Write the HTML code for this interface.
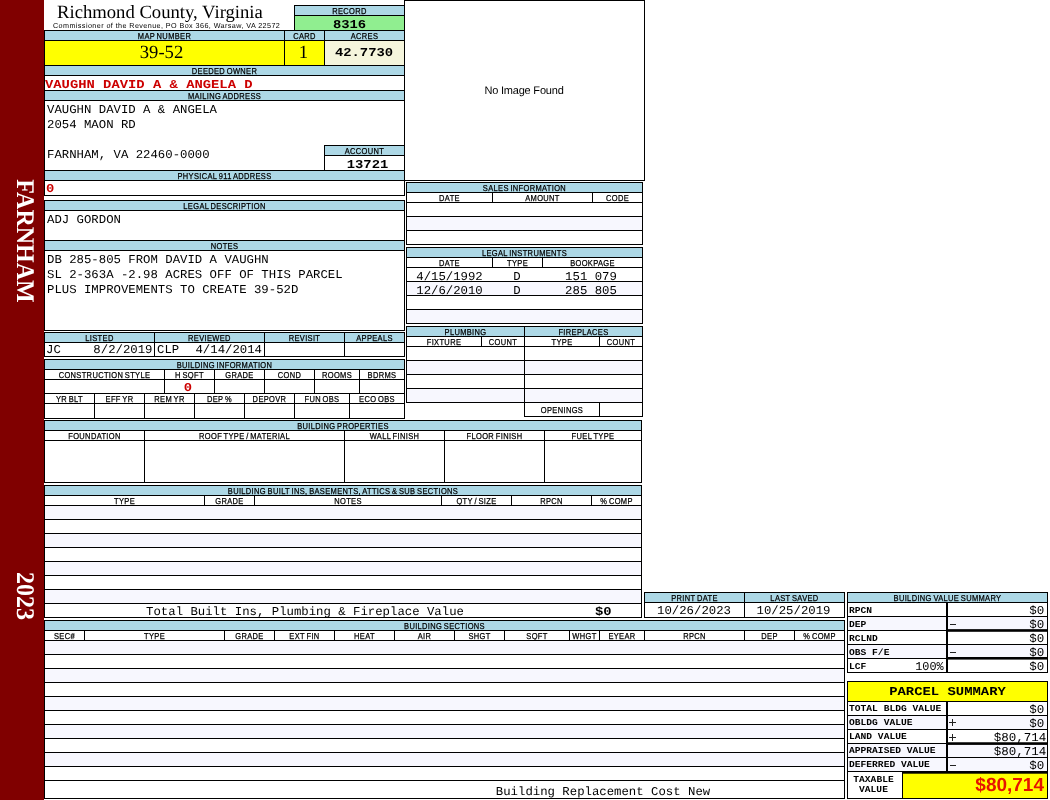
<!DOCTYPE html>
<html><head><meta charset="utf-8"><title>Property Card</title>
<style>
html,body{margin:0;padding:0;background:#fff;}
body{width:1050px;height:800px;position:relative;overflow:hidden;font-family:"Liberation Sans",sans-serif;text-rendering:geometricPrecision;}
#p{position:absolute;left:0;top:0;width:1050px;height:800px;will-change:transform;}
#p div{position:absolute;white-space:nowrap;overflow:visible;line-height:14px;height:14px;}
.h{font-family:"Liberation Sans",sans-serif;font-size:8.6px;letter-spacing:.4px;text-align:center;color:#000;transform:scaleX(.872);word-spacing:-.9px;-webkit-text-stroke:.25px #000;}
.m{font-family:"Liberation Mono",monospace;font-size:12px;color:#000;transform-origin:0 50%;}
.b{font-weight:bold;}
.m.c{text-align:center;transform-origin:50% 50%;}
.m.r{text-align:right;transform-origin:100% 50%;}
.red{color:#cc0000;}
.title{font-family:"Liberation Serif",serif;font-size:18.67px;text-align:center;}
.sub{font-family:"Liberation Sans",sans-serif;font-size:7.2px;text-align:center;letter-spacing:.42px;}
.big{font-family:"Liberation Serif",serif;font-size:18.67px;text-align:center;}
.noimg{font-family:"Liberation Sans",sans-serif;font-size:11px;letter-spacing:-.2px;text-align:center;}
.tax{font-family:"Liberation Sans",sans-serif;font-weight:bold;font-size:19px;color:#e61400;text-align:right;}
#p .side{font:bold 24px/24px "Liberation Serif",serif;height:24px;color:#fff;transform:translate(-50%,-50%) rotate(90deg) scaleY(1.06);}
</style></head>
<body><div id="p">
<div style="left:0px;top:0px;width:44px;height:800px;background:#800000"></div>
<div class="side" style="left:24px;top:240.6px;">FARNHAM</div>
<div class="side" style="left:24px;top:596px;">2023</div>
<div class="title" style="left:57px;top:6px;width:201px;">Richmond County, Virginia</div>
<div class="sub" style="left:53px;top:19px;width:226px;">Commissioner of the Revenue, PO Box 366, Warsaw, VA 22572</div>
<div style="left:295px;top:6px;width:109px;height:9px;background:#add8e6"></div>
<div class="h" style="left:295px;top:4px;width:109px;">RECORD</div>
<div style="left:295px;top:16px;width:109px;height:14px;background:#90ee90"></div>
<div style="left:294px;top:5px;width:111px;height:1px;background:#000"></div>
<div style="left:294px;top:30px;width:111px;height:1px;background:#000"></div>
<div style="left:294px;top:5px;width:1px;height:26px;background:#000"></div>
<div style="left:404px;top:5px;width:1px;height:26px;background:#000"></div>
<div style="left:294px;top:15px;width:111px;height:1px;background:#000"></div>
<div class="m b c" style="left:295px;top:18px;width:109px;transform:scaleX(1.1528);">8316</div>
<div style="left:45px;top:31px;width:239px;height:9px;background:#add8e6"></div>
<div class="h" style="left:45px;top:29px;width:239px;">MAP NUMBER</div>
<div style="left:285px;top:31px;width:39px;height:9px;background:#add8e6"></div>
<div class="h" style="left:285px;top:29px;width:39px;">CARD</div>
<div style="left:325px;top:31px;width:79px;height:9px;background:#add8e6"></div>
<div class="h" style="left:325px;top:29px;width:79px;">ACRES</div>
<div style="left:45px;top:41px;width:239px;height:24px;background:#ffff00"></div>
<div style="left:285px;top:41px;width:39px;height:24px;background:#ffff00"></div>
<div style="left:325px;top:41px;width:79px;height:24px;background:#f5f5dc"></div>
<div class="big" style="left:45px;top:46px;width:233px;">39-52</div>
<div class="big" style="left:285px;top:46px;width:37px;">1</div>
<div class="m b c" style="left:325px;top:46px;width:78px;transform:scaleX(1.1528);">42.7730</div>
<div style="left:44px;top:30px;width:361px;height:1px;background:#000"></div>
<div style="left:44px;top:40px;width:361px;height:1px;background:#000"></div>
<div style="left:44px;top:65px;width:361px;height:1px;background:#000"></div>
<div style="left:44px;top:30px;width:1px;height:36px;background:#000"></div>
<div style="left:284px;top:30px;width:1px;height:36px;background:#000"></div>
<div style="left:324px;top:30px;width:1px;height:36px;background:#000"></div>
<div style="left:404px;top:30px;width:1px;height:36px;background:#000"></div>
<div style="left:45px;top:66px;width:359px;height:9px;background:#add8e6"></div>
<div class="h" style="left:45px;top:64px;width:359px;">DEEDED OWNER</div>
<div style="left:44px;top:75px;width:361px;height:1px;background:#000"></div>
<div class="m b red" style="left:45.4px;top:78px;width:350px;transform:scaleX(1.1528);">VAUGHN DAVID A &amp; ANGELA D</div>
<div style="left:45px;top:91px;width:359px;height:9px;background:#add8e6"></div>
<div class="h" style="left:45px;top:89px;width:359px;">MAILING ADDRESS</div>
<div style="left:44px;top:90px;width:361px;height:1px;background:#000"></div>
<div style="left:44px;top:100px;width:361px;height:1px;background:#000"></div>
<div class="m" style="left:47px;top:103px;width:350px;transform:scaleX(1.0264);">VAUGHN DAVID A &amp; ANGELA</div>
<div class="m" style="left:47px;top:118px;width:350px;transform:scaleX(1.0264);">2054 MAON RD</div>
<div class="m" style="left:47px;top:148px;width:350px;transform:scaleX(1.0264);">FARNHAM, VA 22460-0000</div>
<div style="left:325px;top:146px;width:79px;height:9px;background:#add8e6"></div>
<div class="h" style="left:325px;top:144px;width:79px;">ACCOUNT</div>
<div style="left:324px;top:145px;width:81px;height:1px;background:#000"></div>
<div style="left:324px;top:170px;width:81px;height:1px;background:#000"></div>
<div style="left:324px;top:145px;width:1px;height:26px;background:#000"></div>
<div style="left:404px;top:145px;width:1px;height:26px;background:#000"></div>
<div style="left:324px;top:155px;width:81px;height:1px;background:#000"></div>
<div class="m b c" style="left:325px;top:158px;width:85px;transform:scaleX(1.1528);">13721</div>
<div style="left:45px;top:171px;width:359px;height:9px;background:#add8e6"></div>
<div class="h" style="left:45px;top:169px;width:359px;">PHYSICAL 911 ADDRESS</div>
<div style="left:44px;top:170px;width:361px;height:1px;background:#000"></div>
<div style="left:44px;top:180px;width:361px;height:1px;background:#000"></div>
<div style="left:44px;top:195px;width:361px;height:1px;background:#000"></div>
<div class="m b red" style="left:46px;top:182px;width:100px;transform:scaleX(1.1528);">0</div>
<div style="left:44px;top:65px;width:1px;height:131px;background:#000"></div>
<div style="left:404px;top:65px;width:1px;height:131px;background:#000"></div>
<div style="left:45px;top:201px;width:359px;height:9px;background:#add8e6"></div>
<div class="h" style="left:45px;top:199px;width:359px;">LEGAL DESCRIPTION</div>
<div style="left:45px;top:241px;width:359px;height:9px;background:#add8e6"></div>
<div class="h" style="left:45px;top:239px;width:359px;">NOTES</div>
<div style="left:44px;top:200px;width:361px;height:1px;background:#000"></div>
<div style="left:44px;top:210px;width:361px;height:1px;background:#000"></div>
<div style="left:44px;top:240px;width:361px;height:1px;background:#000"></div>
<div style="left:44px;top:250px;width:361px;height:1px;background:#000"></div>
<div style="left:44px;top:330px;width:361px;height:1px;background:#000"></div>
<div style="left:44px;top:200px;width:1px;height:131px;background:#000"></div>
<div style="left:404px;top:200px;width:1px;height:131px;background:#000"></div>
<div class="m" style="left:47px;top:213px;width:350px;transform:scaleX(1.0264);">ADJ GORDON</div>
<div class="m" style="left:47px;top:253px;width:350px;transform:scaleX(1.0264);">DB 285-805 FROM DAVID A VAUGHN</div>
<div class="m" style="left:47px;top:268px;width:350px;transform:scaleX(1.0264);">SL 2-363A -2.98 ACRES OFF OF THIS PARCEL</div>
<div class="m" style="left:47px;top:283px;width:350px;transform:scaleX(1.0264);">PLUS IMPROVEMENTS TO CREATE 39-52D</div>
<div style="left:45px;top:333px;width:109px;height:9px;background:#add8e6"></div>
<div class="h" style="left:45px;top:331px;width:109px;">LISTED</div>
<div style="left:155px;top:333px;width:109px;height:9px;background:#add8e6"></div>
<div class="h" style="left:155px;top:331px;width:109px;">REVIEWED</div>
<div style="left:265px;top:333px;width:79px;height:9px;background:#add8e6"></div>
<div class="h" style="left:265px;top:331px;width:79px;">REVISIT</div>
<div style="left:345px;top:333px;width:59px;height:9px;background:#add8e6"></div>
<div class="h" style="left:345px;top:331px;width:59px;">APPEALS</div>
<div style="left:44px;top:332px;width:361px;height:1px;background:#000"></div>
<div style="left:44px;top:342px;width:361px;height:1px;background:#000"></div>
<div style="left:44px;top:356px;width:361px;height:1px;background:#000"></div>
<div style="left:44px;top:332px;width:1px;height:25px;background:#000"></div>
<div style="left:154px;top:332px;width:1px;height:25px;background:#000"></div>
<div style="left:264px;top:332px;width:1px;height:25px;background:#000"></div>
<div style="left:344px;top:332px;width:1px;height:25px;background:#000"></div>
<div style="left:404px;top:332px;width:1px;height:25px;background:#000"></div>
<div class="m" style="left:46.3px;top:343px;width:50px;transform:scaleX(1.0264);">JC</div>
<div class="m r" style="left:60px;top:343px;width:92.5px;transform:scaleX(1.0264);">8/2/2019</div>
<div class="m" style="left:156.7px;top:343px;width:50px;transform:scaleX(1.0264);">CLP</div>
<div class="m r" style="left:170px;top:343px;width:92px;transform:scaleX(1.0264);">4/14/2014</div>
<div style="left:45px;top:360px;width:359px;height:9px;background:#add8e6"></div>
<div class="h" style="left:45px;top:358px;width:359px;">BUILDING INFORMATION</div>
<div class="h" style="left:45px;top:368px;width:119px;">CONSTRUCTION STYLE</div>
<div class="h" style="left:165px;top:368px;width:49px;">H SQFT</div>
<div class="h" style="left:215px;top:368px;width:49px;">GRADE</div>
<div class="h" style="left:265px;top:368px;width:49px;">COND</div>
<div class="h" style="left:315px;top:368px;width:44px;">ROOMS</div>
<div class="h" style="left:360px;top:368px;width:44px;">BDRMS</div>
<div style="left:44px;top:369px;width:1px;height:25px;background:#000"></div>
<div style="left:164px;top:369px;width:1px;height:25px;background:#000"></div>
<div style="left:214px;top:369px;width:1px;height:25px;background:#000"></div>
<div style="left:264px;top:369px;width:1px;height:25px;background:#000"></div>
<div style="left:314px;top:369px;width:1px;height:25px;background:#000"></div>
<div style="left:359px;top:369px;width:1px;height:25px;background:#000"></div>
<div style="left:404px;top:369px;width:1px;height:25px;background:#000"></div>
<div class="h" style="left:45px;top:392px;width:49px;">YR BLT</div>
<div class="h" style="left:95px;top:392px;width:49px;">EFF YR</div>
<div class="h" style="left:145px;top:392px;width:49px;">REM YR</div>
<div class="h" style="left:195px;top:392px;width:49px;">DEP %</div>
<div class="h" style="left:245px;top:392px;width:49px;">DEPOVR</div>
<div class="h" style="left:295px;top:392px;width:54px;">FUN OBS</div>
<div class="h" style="left:350px;top:392px;width:54px;">ECO OBS</div>
<div style="left:44px;top:393px;width:1px;height:26px;background:#000"></div>
<div style="left:94px;top:393px;width:1px;height:26px;background:#000"></div>
<div style="left:144px;top:393px;width:1px;height:26px;background:#000"></div>
<div style="left:194px;top:393px;width:1px;height:26px;background:#000"></div>
<div style="left:244px;top:393px;width:1px;height:26px;background:#000"></div>
<div style="left:294px;top:393px;width:1px;height:26px;background:#000"></div>
<div style="left:349px;top:393px;width:1px;height:26px;background:#000"></div>
<div style="left:404px;top:393px;width:1px;height:26px;background:#000"></div>
<div style="left:44px;top:359px;width:361px;height:1px;background:#000"></div>
<div style="left:44px;top:369px;width:361px;height:1px;background:#000"></div>
<div style="left:44px;top:379px;width:361px;height:1px;background:#000"></div>
<div style="left:44px;top:393px;width:361px;height:1px;background:#000"></div>
<div style="left:44px;top:403px;width:361px;height:1px;background:#000"></div>
<div style="left:44px;top:418px;width:361px;height:1px;background:#000"></div>
<div style="left:44px;top:359px;width:1px;height:60px;background:#000"></div>
<div style="left:404px;top:359px;width:1px;height:60px;background:#000"></div>
<div class="m b red c" style="left:165px;top:381px;width:46px;transform:scaleX(1.1528);">0</div>
<div style="left:404px;top:0px;width:241px;height:1px;background:#000"></div>
<div style="left:404px;top:180px;width:241px;height:1px;background:#000"></div>
<div style="left:404px;top:0px;width:1px;height:181px;background:#000"></div>
<div style="left:644px;top:0px;width:1px;height:181px;background:#000"></div>
<div class="noimg" style="left:406px;top:84px;width:236px;">No Image Found</div>
<div style="left:407px;top:183px;width:235px;height:9px;background:#add8e6"></div>
<div class="h" style="left:407px;top:181px;width:235px;">SALES INFORMATION</div>
<div class="h" style="left:407px;top:191px;width:85px;">DATE</div>
<div style="left:406px;top:192px;width:1px;height:11px;background:#000"></div>
<div class="h" style="left:493px;top:191px;width:99px;">AMOUNT</div>
<div style="left:492px;top:192px;width:1px;height:11px;background:#000"></div>
<div class="h" style="left:593px;top:191px;width:49px;">CODE</div>
<div style="left:592px;top:192px;width:1px;height:11px;background:#000"></div>
<div style="left:407px;top:217px;width:235px;height:13px;background:#f7f7fe"></div>
<div style="left:406px;top:182px;width:237px;height:1px;background:#000"></div>
<div style="left:406px;top:192px;width:237px;height:1px;background:#000"></div>
<div style="left:406px;top:202px;width:237px;height:1px;background:#000"></div>
<div style="left:406px;top:216px;width:237px;height:1px;background:#000"></div>
<div style="left:406px;top:230px;width:237px;height:1px;background:#000"></div>
<div style="left:406px;top:244px;width:237px;height:1px;background:#000"></div>
<div style="left:406px;top:182px;width:1px;height:63px;background:#000"></div>
<div style="left:642px;top:182px;width:1px;height:63px;background:#000"></div>
<div style="left:407px;top:248px;width:235px;height:9px;background:#add8e6"></div>
<div class="h" style="left:407px;top:246px;width:235px;">LEGAL INSTRUMENTS</div>
<div class="h" style="left:407px;top:256px;width:85px;">DATE</div>
<div style="left:406px;top:257px;width:1px;height:11px;background:#000"></div>
<div class="h" style="left:493px;top:256px;width:49px;">TYPE</div>
<div style="left:492px;top:257px;width:1px;height:11px;background:#000"></div>
<div class="h" style="left:543px;top:256px;width:99px;">BOOKPAGE</div>
<div style="left:542px;top:257px;width:1px;height:11px;background:#000"></div>
<div style="left:407px;top:282px;width:235px;height:13px;background:#f7f7fe"></div>
<div style="left:407px;top:310px;width:235px;height:13px;background:#f7f7fe"></div>
<div style="left:406px;top:247px;width:237px;height:1px;background:#000"></div>
<div style="left:406px;top:257px;width:237px;height:1px;background:#000"></div>
<div style="left:406px;top:267px;width:237px;height:1px;background:#000"></div>
<div style="left:406px;top:281px;width:237px;height:1px;background:#000"></div>
<div style="left:406px;top:295px;width:237px;height:1px;background:#000"></div>
<div style="left:406px;top:309px;width:237px;height:1px;background:#000"></div>
<div style="left:406px;top:323px;width:237px;height:1px;background:#000"></div>
<div style="left:406px;top:247px;width:1px;height:77px;background:#000"></div>
<div style="left:642px;top:247px;width:1px;height:77px;background:#000"></div>
<div class="m c" style="left:407px;top:270px;width:85px;transform:scaleX(1.0264);">4/15/1992</div>
<div class="m c" style="left:493px;top:270px;width:48px;transform:scaleX(1.0264);">D</div>
<div class="m c" style="left:543px;top:270px;width:96px;transform:scaleX(1.0264);">151 079</div>
<div class="m c" style="left:407px;top:284px;width:85px;transform:scaleX(1.0264);">12/6/2010</div>
<div class="m c" style="left:493px;top:284px;width:48px;transform:scaleX(1.0264);">D</div>
<div class="m c" style="left:543px;top:284px;width:96px;transform:scaleX(1.0264);">285 805</div>
<div style="left:407px;top:327px;width:117px;height:9px;background:#add8e6"></div>
<div class="h" style="left:407px;top:325px;width:117px;">PLUMBING</div>
<div style="left:525px;top:327px;width:117px;height:9px;background:#add8e6"></div>
<div class="h" style="left:525px;top:325px;width:117px;">FIREPLACES</div>
<div class="h" style="left:407px;top:335px;width:74px;">FIXTURE</div>
<div class="h" style="left:482px;top:335px;width:42px;">COUNT</div>
<div class="h" style="left:525px;top:335px;width:74px;">TYPE</div>
<div class="h" style="left:600px;top:335px;width:42px;">COUNT</div>
<div style="left:407px;top:361px;width:235px;height:13px;background:#f7f7fe"></div>
<div style="left:407px;top:389px;width:235px;height:13px;background:#f7f7fe"></div>
<div style="left:406px;top:326px;width:237px;height:1px;background:#000"></div>
<div style="left:406px;top:336px;width:237px;height:1px;background:#000"></div>
<div style="left:406px;top:346px;width:237px;height:1px;background:#000"></div>
<div style="left:406px;top:360px;width:237px;height:1px;background:#000"></div>
<div style="left:406px;top:374px;width:237px;height:1px;background:#000"></div>
<div style="left:406px;top:388px;width:237px;height:1px;background:#000"></div>
<div style="left:406px;top:402px;width:237px;height:1px;background:#000"></div>
<div style="left:524px;top:416px;width:119px;height:1px;background:#000"></div>
<div style="left:406px;top:326px;width:1px;height:77px;background:#000"></div>
<div style="left:524px;top:326px;width:1px;height:91px;background:#000"></div>
<div style="left:642px;top:326px;width:1px;height:91px;background:#000"></div>
<div style="left:481px;top:336px;width:1px;height:11px;background:#000"></div>
<div style="left:599px;top:336px;width:1px;height:11px;background:#000"></div>
<div style="left:599px;top:402px;width:1px;height:15px;background:#000"></div>
<div class="h" style="left:525px;top:403px;width:74px;">OPENINGS</div>
<div style="left:45px;top:421px;width:596px;height:9px;background:#add8e6"></div>
<div class="h" style="left:45px;top:419px;width:596px;">BUILDING PROPERTIES</div>
<div class="h" style="left:45px;top:429px;width:99px;">FOUNDATION</div>
<div class="h" style="left:145px;top:429px;width:199px;">ROOF TYPE / MATERIAL</div>
<div class="h" style="left:345px;top:429px;width:99px;">WALL FINISH</div>
<div class="h" style="left:445px;top:429px;width:99px;">FLOOR FINISH</div>
<div class="h" style="left:545px;top:429px;width:96px;">FUEL TYPE</div>
<div style="left:44px;top:430px;width:1px;height:53px;background:#000"></div>
<div style="left:144px;top:430px;width:1px;height:53px;background:#000"></div>
<div style="left:344px;top:430px;width:1px;height:53px;background:#000"></div>
<div style="left:444px;top:430px;width:1px;height:53px;background:#000"></div>
<div style="left:544px;top:430px;width:1px;height:53px;background:#000"></div>
<div style="left:641px;top:430px;width:1px;height:53px;background:#000"></div>
<div style="left:44px;top:420px;width:598px;height:1px;background:#000"></div>
<div style="left:44px;top:430px;width:598px;height:1px;background:#000"></div>
<div style="left:44px;top:440px;width:598px;height:1px;background:#000"></div>
<div style="left:44px;top:482px;width:598px;height:1px;background:#000"></div>
<div style="left:44px;top:420px;width:1px;height:63px;background:#000"></div>
<div style="left:641px;top:420px;width:1px;height:63px;background:#000"></div>
<div style="left:45px;top:486px;width:596px;height:9px;background:#add8e6"></div>
<div class="h" style="left:45px;top:484px;width:596px;">BUILDING BUILT INS, BASEMENTS, ATTICS &amp; SUB SECTIONS</div>
<div class="h" style="left:45px;top:494px;width:159px;">TYPE</div>
<div style="left:44px;top:495px;width:1px;height:11px;background:#000"></div>
<div class="h" style="left:205px;top:494px;width:49px;">GRADE</div>
<div style="left:204px;top:495px;width:1px;height:11px;background:#000"></div>
<div class="h" style="left:255px;top:494px;width:186px;">NOTES</div>
<div style="left:254px;top:495px;width:1px;height:11px;background:#000"></div>
<div class="h" style="left:442px;top:494px;width:69px;">QTY / SIZE</div>
<div style="left:441px;top:495px;width:1px;height:11px;background:#000"></div>
<div class="h" style="left:512px;top:494px;width:79px;">RPCN</div>
<div style="left:511px;top:495px;width:1px;height:11px;background:#000"></div>
<div class="h" style="left:592px;top:494px;width:49px;">% COMP</div>
<div style="left:591px;top:495px;width:1px;height:11px;background:#000"></div>
<div style="left:45px;top:506px;width:596px;height:13px;background:#f7f7fe"></div>
<div style="left:45px;top:534px;width:596px;height:13px;background:#f7f7fe"></div>
<div style="left:45px;top:562px;width:596px;height:13px;background:#f7f7fe"></div>
<div style="left:45px;top:590px;width:596px;height:13px;background:#f7f7fe"></div>
<div style="left:44px;top:485px;width:598px;height:1px;background:#000"></div>
<div style="left:44px;top:495px;width:598px;height:1px;background:#000"></div>
<div style="left:44px;top:505px;width:598px;height:1px;background:#000"></div>
<div style="left:44px;top:519px;width:598px;height:1px;background:#000"></div>
<div style="left:44px;top:533px;width:598px;height:1px;background:#000"></div>
<div style="left:44px;top:547px;width:598px;height:1px;background:#000"></div>
<div style="left:44px;top:561px;width:598px;height:1px;background:#000"></div>
<div style="left:44px;top:575px;width:598px;height:1px;background:#000"></div>
<div style="left:44px;top:589px;width:598px;height:1px;background:#000"></div>
<div style="left:44px;top:603px;width:598px;height:1px;background:#000"></div>
<div style="left:44px;top:617px;width:598px;height:1px;background:#000"></div>
<div style="left:44px;top:485px;width:1px;height:133px;background:#000"></div>
<div style="left:641px;top:485px;width:1px;height:133px;background:#000"></div>
<div class="m c" style="left:105.3px;top:605px;width:400px;transform:scaleX(1.0264);">Total Built Ins, Plumbing &amp; Fireplace Value</div>
<div class="m b r" style="left:540px;top:605px;width:71.6px;transform:scaleX(1.1528);">$0</div>
<div style="left:645px;top:593px;width:99px;height:9px;background:#add8e6"></div>
<div class="h" style="left:645px;top:591px;width:99px;">PRINT DATE</div>
<div style="left:745px;top:593px;width:99px;height:9px;background:#add8e6"></div>
<div class="h" style="left:745px;top:591px;width:99px;">LAST SAVED</div>
<div style="left:644px;top:592px;width:201px;height:1px;background:#000"></div>
<div style="left:644px;top:602px;width:201px;height:1px;background:#000"></div>
<div style="left:644px;top:617px;width:201px;height:1px;background:#000"></div>
<div style="left:644px;top:592px;width:1px;height:26px;background:#000"></div>
<div style="left:744px;top:592px;width:1px;height:26px;background:#000"></div>
<div style="left:844px;top:592px;width:1px;height:26px;background:#000"></div>
<div class="m c" style="left:645px;top:604px;width:98px;transform:scaleX(1.0264);">10/26/2023</div>
<div class="m c" style="left:745px;top:604px;width:97px;transform:scaleX(1.0264);">10/25/2019</div>
<div style="left:45px;top:621px;width:799px;height:9px;background:#add8e6"></div>
<div class="h" style="left:45px;top:619px;width:799px;">BUILDING SECTIONS</div>
<div class="h" style="left:45px;top:629px;width:39px;">SEC#</div>
<div style="left:44px;top:630px;width:1px;height:11px;background:#000"></div>
<div class="h" style="left:85px;top:629px;width:139px;">TYPE</div>
<div style="left:84px;top:630px;width:1px;height:11px;background:#000"></div>
<div class="h" style="left:225px;top:629px;width:49px;">GRADE</div>
<div style="left:224px;top:630px;width:1px;height:11px;background:#000"></div>
<div class="h" style="left:275px;top:629px;width:59px;">EXT FIN</div>
<div style="left:274px;top:630px;width:1px;height:11px;background:#000"></div>
<div class="h" style="left:335px;top:629px;width:59px;">HEAT</div>
<div style="left:334px;top:630px;width:1px;height:11px;background:#000"></div>
<div class="h" style="left:395px;top:629px;width:59px;">AIR</div>
<div style="left:394px;top:630px;width:1px;height:11px;background:#000"></div>
<div class="h" style="left:455px;top:629px;width:49px;">SHGT</div>
<div style="left:454px;top:630px;width:1px;height:11px;background:#000"></div>
<div class="h" style="left:505px;top:629px;width:64px;">SQFT</div>
<div style="left:504px;top:630px;width:1px;height:11px;background:#000"></div>
<div class="h" style="left:570px;top:629px;width:29px;">WHGT</div>
<div style="left:569px;top:630px;width:1px;height:11px;background:#000"></div>
<div class="h" style="left:600px;top:629px;width:44px;">EYEAR</div>
<div style="left:599px;top:630px;width:1px;height:11px;background:#000"></div>
<div class="h" style="left:645px;top:629px;width:99px;">RPCN</div>
<div style="left:644px;top:630px;width:1px;height:11px;background:#000"></div>
<div class="h" style="left:745px;top:629px;width:49px;">DEP</div>
<div style="left:744px;top:630px;width:1px;height:11px;background:#000"></div>
<div class="h" style="left:795px;top:629px;width:49px;">% COMP</div>
<div style="left:794px;top:630px;width:1px;height:11px;background:#000"></div>
<div style="left:45px;top:641px;width:799px;height:13px;background:#f7f7fe"></div>
<div style="left:45px;top:669px;width:799px;height:13px;background:#f7f7fe"></div>
<div style="left:45px;top:697px;width:799px;height:13px;background:#f7f7fe"></div>
<div style="left:45px;top:725px;width:799px;height:13px;background:#f7f7fe"></div>
<div style="left:45px;top:753px;width:799px;height:13px;background:#f7f7fe"></div>
<div style="left:44px;top:620px;width:801px;height:1px;background:#000"></div>
<div style="left:44px;top:630px;width:801px;height:1px;background:#000"></div>
<div style="left:44px;top:640px;width:801px;height:1px;background:#000"></div>
<div style="left:44px;top:654px;width:801px;height:1px;background:#000"></div>
<div style="left:44px;top:668px;width:801px;height:1px;background:#000"></div>
<div style="left:44px;top:682px;width:801px;height:1px;background:#000"></div>
<div style="left:44px;top:696px;width:801px;height:1px;background:#000"></div>
<div style="left:44px;top:710px;width:801px;height:1px;background:#000"></div>
<div style="left:44px;top:724px;width:801px;height:1px;background:#000"></div>
<div style="left:44px;top:738px;width:801px;height:1px;background:#000"></div>
<div style="left:44px;top:752px;width:801px;height:1px;background:#000"></div>
<div style="left:44px;top:766px;width:801px;height:1px;background:#000"></div>
<div style="left:44px;top:780px;width:801px;height:1px;background:#000"></div>
<div style="left:44px;top:798px;width:801px;height:1px;background:#000"></div>
<div style="left:44px;top:620px;width:1px;height:179px;background:#000"></div>
<div style="left:844px;top:620px;width:1px;height:179px;background:#000"></div>
<div class="m c" style="left:403px;top:785px;width:400px;transform:scaleX(1.0264);">Building Replacement Cost New</div>
<div style="left:848px;top:593px;width:199px;height:9px;background:#add8e6"></div>
<div class="h" style="left:848px;top:591px;width:199px;">BUILDING VALUE SUMMARY</div>
<div style="left:848px;top:617px;width:199px;height:13px;background:#f7f7fe"></div>
<div style="left:848px;top:645px;width:199px;height:13px;background:#f7f7fe"></div>
<div class="m b" style="left:849px;top:604px;width:97px;transform:scaleX(1.0685);font-size:9px;">RPCN</div>
<div class="m r" style="left:948px;top:604px;width:96.2px;transform:scaleX(1.0417);">$0</div>
<div class="m b" style="left:849px;top:618px;width:97px;transform:scaleX(1.0685);font-size:9px;">DEP</div>
<div class="m r" style="left:948px;top:618px;width:96.2px;transform:scaleX(1.0417);">$0</div>
<div style="left:950px;top:624px;width:6px;height:1px;background:#222"></div>
<div class="m b" style="left:849px;top:632px;width:97px;transform:scaleX(1.0685);font-size:9px;">RCLND</div>
<div class="m r" style="left:948px;top:632px;width:96.2px;transform:scaleX(1.0417);">$0</div>
<div class="m b" style="left:849px;top:646px;width:97px;transform:scaleX(1.0685);font-size:9px;">OBS F/E</div>
<div class="m r" style="left:948px;top:646px;width:96.2px;transform:scaleX(1.0417);">$0</div>
<div style="left:950px;top:652px;width:6px;height:1px;background:#222"></div>
<div class="m b" style="left:849px;top:660px;width:97px;transform:scaleX(1.0685);font-size:9px;">LCF</div>
<div class="m r" style="left:948px;top:660px;width:96.2px;transform:scaleX(1.0417);">$0</div>
<div class="m r" style="left:849px;top:660px;width:94.6px;transform:scaleX(0.9861);">100%</div>
<div style="left:847px;top:592px;width:201px;height:1px;background:#000"></div>
<div style="left:847px;top:602px;width:201px;height:1px;background:#000"></div>
<div style="left:847px;top:616px;width:201px;height:1px;background:#000"></div>
<div style="left:847px;top:630px;width:201px;height:1px;background:#000"></div>
<div style="left:847px;top:644px;width:201px;height:1px;background:#000"></div>
<div style="left:847px;top:658px;width:201px;height:1px;background:#000"></div>
<div style="left:847px;top:672px;width:201px;height:1px;background:#000"></div>
<div style="left:947px;top:629px;width:101px;height:1px;background:rgba(0,0,0,0.85)"></div>
<div style="left:947px;top:630px;width:101px;height:1px;background:#000"></div>
<div style="left:947px;top:631px;width:101px;height:1px;background:rgba(0,0,0,0.8)"></div>
<div style="left:947px;top:657px;width:101px;height:1px;background:rgba(0,0,0,1)"></div>
<div style="left:947px;top:658px;width:101px;height:1px;background:#000"></div>
<div style="left:947px;top:659px;width:101px;height:1px;background:rgba(0,0,0,0.6)"></div>
<div style="left:847px;top:592px;width:1px;height:81px;background:#000"></div>
<div style="left:1047px;top:592px;width:1px;height:81px;background:#000"></div>
<div style="left:946px;top:602px;width:2px;height:71px;background:#000"></div>
<div style="left:848px;top:682px;width:199px;height:19px;background:#ffff00"></div>
<div class="m b c" style="left:848px;top:685px;width:199px;transform:scaleX(1.1569);">PARCEL SUMMARY</div>
<div style="left:848px;top:716px;width:199px;height:13px;background:#f7f7fe"></div>
<div style="left:848px;top:744px;width:199px;height:13px;background:#f7f7fe"></div>
<div style="left:848px;top:758px;width:199px;height:13px;background:#f7f7fe"></div>
<div class="m b" style="left:849px;top:702px;width:97px;transform:scaleX(1.0685);font-size:9px;">TOTAL BLDG VALUE</div>
<div class="m r" style="left:948px;top:703px;width:96.2px;transform:scaleX(1.0417);">$0</div>
<div class="m b" style="left:849px;top:716px;width:97px;transform:scaleX(1.0685);font-size:9px;">OBLDG VALUE</div>
<div class="m r" style="left:948px;top:717px;width:96.2px;transform:scaleX(1.0417);">$0</div>
<div class="m b" style="left:849px;top:730px;width:97px;transform:scaleX(1.0685);font-size:9px;">LAND VALUE</div>
<div class="m r" style="left:948px;top:731px;width:98.2px;transform:scaleX(1.0417);">$80,714</div>
<div class="m b" style="left:849px;top:744px;width:97px;transform:scaleX(1.0685);font-size:9px;">APPRAISED VALUE</div>
<div class="m r" style="left:948px;top:745px;width:98.2px;transform:scaleX(1.0417);">$80,714</div>
<div class="m b" style="left:849px;top:758px;width:97px;transform:scaleX(1.0685);font-size:9px;">DEFERRED VALUE</div>
<div class="m r" style="left:948px;top:759px;width:96.2px;transform:scaleX(1.0417);">$0</div>
<div style="left:847px;top:681px;width:201px;height:1px;background:#000"></div>
<div style="left:847px;top:701px;width:201px;height:1px;background:#000"></div>
<div style="left:847px;top:715px;width:201px;height:1px;background:#000"></div>
<div style="left:847px;top:729px;width:201px;height:1px;background:#000"></div>
<div style="left:847px;top:743px;width:201px;height:1px;background:#000"></div>
<div style="left:847px;top:757px;width:201px;height:1px;background:#000"></div>
<div style="left:847px;top:771px;width:201px;height:1px;background:#000"></div>
<div style="left:947px;top:742px;width:101px;height:1px;background:rgba(0,0,0,0.75)"></div>
<div style="left:947px;top:743px;width:101px;height:1px;background:#000"></div>
<div style="left:947px;top:744px;width:101px;height:1px;background:rgba(0,0,0,0.9)"></div>
<div style="left:949px;top:722px;width:7px;height:1px;background:#222"></div>
<div style="left:952px;top:719px;width:1px;height:7px;background:#222"></div>
<div style="left:949px;top:737px;width:7px;height:1px;background:#222"></div>
<div style="left:952px;top:734px;width:1px;height:7px;background:#222"></div>
<div style="left:950px;top:765px;width:6px;height:1px;background:#222"></div>
<div style="left:903px;top:772px;width:144px;height:26px;background:#ffff00"></div>
<div style="left:902px;top:771px;width:146px;height:1px;background:rgba(0,0,0,0.95)"></div>
<div style="left:902px;top:772px;width:146px;height:1px;background:#000"></div>
<div style="left:902px;top:773px;width:146px;height:1px;background:rgba(0,0,0,0.7)"></div>
<div style="left:847px;top:798px;width:201px;height:1px;background:#000"></div>
<div style="left:847px;top:681px;width:1px;height:118px;background:#000"></div>
<div style="left:1047px;top:681px;width:1px;height:118px;background:#000"></div>
<div style="left:946px;top:701px;width:2px;height:71px;background:#000"></div>
<div style="left:902px;top:771px;width:1px;height:28px;background:#000"></div>
<div class="m b c" style="left:848px;top:773px;width:51px;transform:scaleX(1.0685);font-size:9px;">TAXABLE</div>
<div class="m b c" style="left:848px;top:783px;width:51px;transform:scaleX(1.0685);font-size:9px;">VALUE</div>
<div class="tax" style="left:903px;top:779px;width:141px;">$80,714</div>
</div></body></html>
